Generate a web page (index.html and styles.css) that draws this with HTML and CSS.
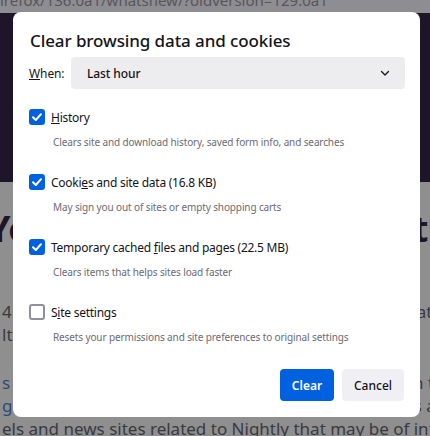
FILE: index.html
```html
<!DOCTYPE html>
<html lang="en">
<head>
<meta charset="utf-8">
<title>Clear browsing data and cookies</title>
<link rel="stylesheet" href="styles.css">
</head>
<body>
<div class="page">
  <div class="urlbar">irefox/136.0a1/whatsnew/?oldversion=129.0a1</div>
  <div class="hero"></div>
  <div class="content">
    <h1 class="big"><span>You’re all set</span><span>what’s next</span></h1>
    <p class="para">4 Nightly is now your default browser and this is great, a</p>
    <p class="para">lt, and you can keep on testing the newest features</p>
    <p class="para gap"><span class="link">s</span> a lot of new stuff, and you can read about all of it in the blog, et</p>
    <p class="para"><span class="link">g</span> on social media and many other places like forums and the topic</p>
    <p class="para">els and news sites related to Nightly that may be of interest to you</p>
  </div>
</div>

<div class="dialog" role="dialog">
  <h2 class="title">Clear browsing data and cookies</h2>
  <div class="when">
    <label class="when-label"><u>W</u>hen:</label>
    <div class="select">
      <span>Last hour</span>
      <svg class="chev" width="12" height="12" viewBox="0 0 12 12"><path d="M2.5 4.5 L6 8 L9.5 4.5" fill="none" stroke="#15141a" stroke-width="1.3" stroke-linecap="round" stroke-linejoin="round"/></svg>
    </div>
  </div>

  <div class="items">
    <div class="item">
      <div class="row"><span class="cb on"><svg width="16" height="16" viewBox="0 0 16 16"><path d="M4 8.2 L6.8 11 L12 5.2" fill="none" stroke="#fff" stroke-width="2" stroke-linecap="round" stroke-linejoin="round"/></svg></span><span class="lbl"><u>H</u>istory</span></div>
      <div class="desc">Clears site and download history, saved form info, and searches</div>
    </div>
    <div class="item">
      <div class="row"><span class="cb on"><svg width="16" height="16" viewBox="0 0 16 16"><path d="M4 8.2 L6.8 11 L12 5.2" fill="none" stroke="#fff" stroke-width="2" stroke-linecap="round" stroke-linejoin="round"/></svg></span><span class="lbl">Cooki<u>e</u>s and site data (16.8 KB)</span></div>
      <div class="desc">May sign you out of sites or empty shopping carts</div>
    </div>
    <div class="item">
      <div class="row"><span class="cb on"><svg width="16" height="16" viewBox="0 0 16 16"><path d="M4 8.2 L6.8 11 L12 5.2" fill="none" stroke="#fff" stroke-width="2" stroke-linecap="round" stroke-linejoin="round"/></svg></span><span class="lbl">Temporary cached <u>f</u>iles and pages (22.5 MB)</span></div>
      <div class="desc">Clears items that helps sites load faster</div>
    </div>
    <div class="item">
      <div class="row"><span class="cb off"></span><span class="lbl">S<u>i</u>te settings</span></div>
      <div class="desc">Resets your permissions and site preferences to original settings</div>
    </div>
  </div>

  <div class="buttons">
    <button class="btn primary">Clear</button>
    <button class="btn secondary">Cancel</button>
  </div>
</div>
</body>
</html>
```
FILE: styles.css
```css
* { box-sizing: border-box; }
html, body { margin: 0; padding: 0; }
body {
  width: 430px;
  height: 436px;
  overflow: hidden;
  position: relative;
  background: #8f8f8f;
  font-family: "Noto Sans", "Open Sans", sans-serif;
}
.page { width: 430px; }
.urlbar {
  height: 13px;
  background: #8e8d92;
  color: #57565b;
  font-size: 15px;
  line-height: 0px;
  padding-top: 0;
  white-space: nowrap;
  overflow: hidden;
}
.hero {
  height: 169px;
  background: #1e1528;
}
.content {
  background: #8f8f8f;
  overflow: hidden;
  white-space: nowrap;
}
.big {
  margin: 26px 2px 0 -12px;
  display: flex;
  justify-content: space-between;
  font-size: 36px;
  line-height: 42px;
  font-weight: 700;
  color: #1e1528;
  letter-spacing: -0.5px;
}
.para {
  margin: 0 0 0 2px;
  font-size: 17px;
  line-height: 23px;
  color: #3a3940;
}
.content .big + .para { margin-top: 50px; }
.para.gap { margin-top: 25px; }
.link { color: #2a4c78; }

.dialog {
  position: absolute;
  left: 13px;
  top: 12px;
  width: 407px;
  height: 405px;
  background: #ffffff;
  border-radius: 8px;
  padding: 17px 15px 16px 16px;
  color: #15141a;
  display: flex;
  flex-direction: column;
}
.title {
  margin: 0;
  font-size: 17px;
  line-height: 24px;
  font-weight: 500;
  letter-spacing: -0.1px;
  color: #15141a;
  padding-left: 1px;
}
.when {
  display: flex;
  align-items: center;
  margin-top: 4px;
}
.when-label {
  width: 42px;
  font-size: 12px;
  letter-spacing: -0.1px;
  color: #15141a;
}
.select {
  flex: 1;
  height: 32px;
  background: #ededf0;
  border-radius: 4px;
  display: flex;
  align-items: center;
  justify-content: space-between;
  padding: 0 14px 0 16px;
  font-size: 12px;
  font-weight: 500;
  letter-spacing: -0.1px;
}
.chev { display: block; }
.items {
  display: flex;
  flex-direction: column;
  gap: 22px;
  margin-top: 18px;
}
.row {
  display: flex;
  align-items: center;
  gap: 6px;
  height: 20px;
}
.cb {
  width: 16px;
  height: 16px;
  border-radius: 3px;
  flex: none;
  display: block;
}
.cb svg { display: block; }
.cb.on { background: #0061e0; }
.cb.off { border: 2px solid #8f8f9d; }
.lbl { font-size: 12px; letter-spacing: -0.25px; color: #15141a; }
.desc {
  margin-top: 7px;
  padding-left: 24px;
  font-size: 10px;
  letter-spacing: -0.12px;
  line-height: 16px;
  color: #6b6b75;
}
.buttons {
  margin-top: auto;
  display: flex;
  justify-content: flex-end;
  gap: 8px;
  padding-right: 1px;
}
.btn {
  height: 32px;
  border: none;
  border-radius: 4px;
  font-family: inherit;
  font-size: 12px;
  font-weight: 600;
  padding: 0;
}
.primary { background: #0061e0; color: #fff; width: 54px; }
.secondary { background: #f0f0f4; color: #15141a; width: 62px; font-weight: 500; }
```
